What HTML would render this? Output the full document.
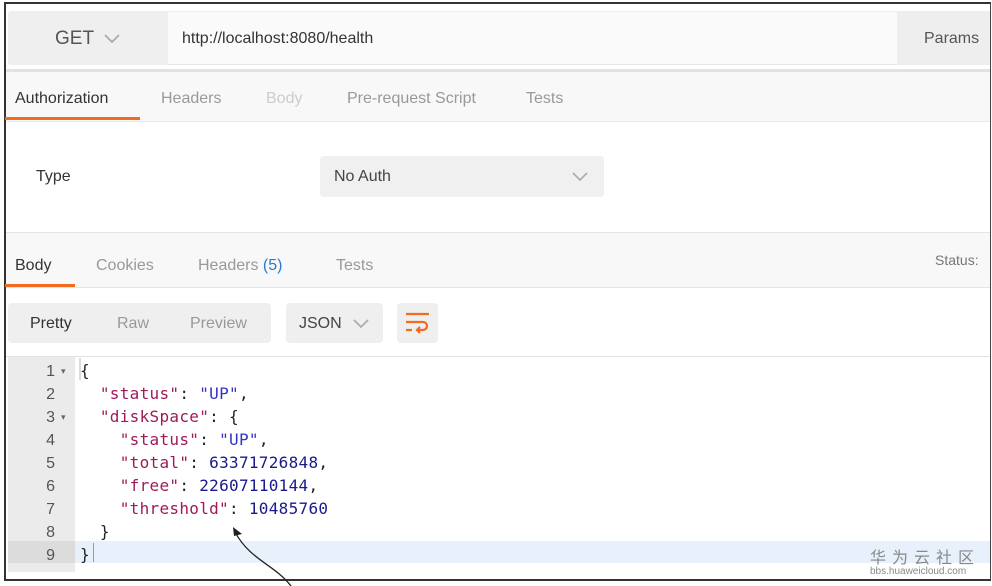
<!DOCTYPE html>
<html><head><meta charset="utf-8"><style>
*{margin:0;padding:0;box-sizing:border-box}
body{width:992px;height:586px;overflow:hidden;background:#fff;font-family:"Liberation Sans",sans-serif;position:relative}
.a{position:absolute}
.t{font-size:16px;color:#999}
.code{font-family:"DejaVu Sans Mono","Liberation Mono",monospace;font-size:16px;white-space:pre;letter-spacing:0.3px}
.k{color:#a0195a}.s{color:#3333cc}.n{color:#1a1a8a}.p{color:#222}
.ln{width:55px;text-align:right;font-family:"Liberation Sans",sans-serif;font-size:16px;color:#555}
</style></head><body>
<div class="a" style="left:4px;top:2px;width:987px;height:579px;border:2px solid #333;border-right:1.5px solid #444"></div>
<div class="a" style="left:8px;top:11px;width:160px;height:54px;background:#efefef;border-radius:3px 0 0 3px"></div>
<div class="a" style="left:55px;top:28px;font-size:19px;color:#555">GET</div>
<svg class="a" style="left:103px;top:33px" width="18" height="12"><path d="M2 2l7 7 7-7" fill="none" stroke="#aaa" stroke-width="1.8"/></svg>
<div class="a" style="left:168px;top:11px;width:729px;height:54px;background:#fafafa;border-top:1px solid #eee;border-bottom:1px solid #e6e6e6"></div>
<div class="a" style="left:182px;top:30px;font-size:16px;color:#333">http://localhost:8080/health</div>
<div class="a" style="left:897px;top:11px;width:93px;height:54px;background:#eeeeee"></div>
<div class="a" style="left:924px;top:30px;font-size:16px;color:#555">Params</div>
<div class="a" style="left:6px;top:69px;width:984px;height:3px;background:#e2e2e2"></div>
<div class="a" style="left:6px;top:72px;width:984px;height:50px;background:#f8f8f8;border-bottom:1px solid #e8e8e8"></div>
<div class="a" style="left:15px;top:90px;font-size:16px;color:#333">Authorization</div>
<div class="a" style="left:5px;top:117px;width:135px;height:3px;background:#f26b21"></div>
<div class="a t" style="left:161px;top:90px">Headers</div>
<div class="a t" style="left:266px;top:90px;color:#ccc">Body</div>
<div class="a t" style="left:347px;top:90px">Pre-request Script</div>
<div class="a t" style="left:526px;top:90px">Tests</div>
<div class="a" style="left:36px;top:168px;font-size:16px;color:#333">Type</div>
<div class="a" style="left:320px;top:156px;width:284px;height:41px;background:#f0f0f0;border-radius:4px"></div>
<div class="a" style="left:334px;top:168px;font-size:16px;color:#444">No Auth</div>
<svg class="a" style="left:571px;top:171px" width="18" height="12"><path d="M2 2l7 7 7-7" fill="none" stroke="#aaa" stroke-width="1.6"/></svg>
<div class="a" style="left:6px;top:232px;width:984px;height:56px;background:#f8f8f8;border-top:1px solid #e4e4e4;border-bottom:1px solid #e4e4e4"></div>
<div class="a" style="left:15px;top:257px;font-size:16px;color:#333">Body</div>
<div class="a" style="left:5px;top:284px;width:70px;height:3px;background:#f26b21"></div>
<div class="a t" style="left:96px;top:257px">Cookies</div>
<div class="a t" style="left:198px;top:257px">Headers <span style="color:#2a7bd0">(5)</span></div>
<div class="a t" style="left:336px;top:257px">Tests</div>
<div class="a" style="left:935px;top:252px;font-size:14px;color:#777">Status:</div>
<div class="a" style="left:8px;top:303px;width:263px;height:40px;background:#efefef;border-radius:4px"></div>
<div class="a" style="left:30px;top:315px;font-size:16px;color:#333">Pretty</div>
<div class="a t" style="left:117px;top:315px">Raw</div>
<div class="a t" style="left:190px;top:315px">Preview</div>
<div class="a" style="left:286px;top:303px;width:97px;height:40px;background:#efefef;border-radius:4px"></div>
<div class="a" style="left:299px;top:315px;font-size:16px;color:#444">JSON</div>
<svg class="a" style="left:352px;top:318px" width="18" height="12"><path d="M2 2l7 7 7-7" fill="none" stroke="#aaa" stroke-width="1.6"/></svg>
<div class="a" style="left:397px;top:303px;width:41px;height:40px;background:#efefef;border-radius:4px"></div>
<svg class="a" style="left:405px;top:311px" width="26" height="24"><g fill="none" stroke="#f26b21" stroke-width="2.2"><path d="M1 3h23"/><path d="M1 11h17a4 4 0 0 1 0 8h-6"/><path d="M15 16l-3 3 3 3"/><path d="M1 19h6"/></g></svg>
<div class="a" style="left:6px;top:356px;width:984px;height:1px;background:#e2e2e2"></div>
<div class="a" style="left:8px;top:357px;width:67px;height:215px;background:#ebebeb"></div>
<div class="a" style="left:8px;top:541px;width:67px;height:22px;background:#dcdcdc"></div>
<div class="a" style="left:75px;top:541px;width:915px;height:22px;background:#e8f0fb"></div>
<div class="a" style="left:79px;top:358px;width:2px;height:22px;background:#ddd"></div>
<div class="a" style="left:93px;top:543px;width:1px;height:19px;background:#999"></div>
<div class="a" style="left:0;top:360px;line-height:23px">
<div class="ln">1</div><div class="ln">2</div><div class="ln">3</div><div class="ln">4</div><div class="ln">5</div><div class="ln">6</div><div class="ln">7</div><div class="ln">8</div><div class="ln">9</div></div>
<div class="a" style="left:61px;top:360px;line-height:23px;font-size:9px;color:#666"><div>▾</div><div>&nbsp;</div><div>▾</div></div>
<div class="a code p" style="left:80px;top:359px;line-height:23px">{
  <span class="k">"status"</span>: <span class="s">"UP"</span>,
  <span class="k">"diskSpace"</span>: {
    <span class="k">"status"</span>: <span class="s">"UP"</span>,
    <span class="k">"total"</span>: <span class="n">63371726848</span>,
    <span class="k">"free"</span>: <span class="n">22607110144</span>,
    <span class="k">"threshold"</span>: <span class="n">10485760</span>
  }
}</div>
<svg class="a" style="left:225px;top:520px" width="80" height="66"><path d="M66 66C50 45 25 40 10 12" fill="none" stroke="#222" stroke-width="1.3"/><path d="M8 7l9 7-8 2z" fill="#222"/></svg>
<div class="a" style="left:870px;top:544px;font-family:'Liberation Sans','Noto Sans CJK SC',sans-serif;font-size:16px;letter-spacing:6px;color:#888">华为云社区</div>
<div class="a" style="left:870px;top:566px;font-size:10px;color:#888">bbs.huaweicloud.com</div>
</body></html>
